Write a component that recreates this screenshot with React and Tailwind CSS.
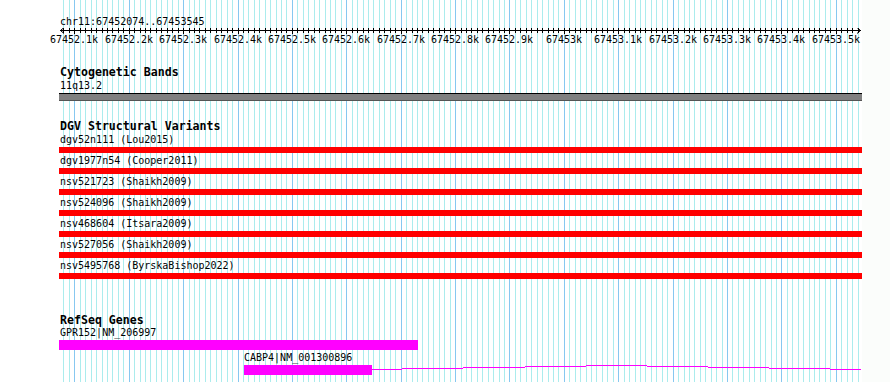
const START = 67452074;
const PX = 0.5439;
const X0 = 60.2;
const xOf = (bp) => X0 + (bp - START) * PX;

const ticks = [];
for (let bp = 67452080; bp <= 67453540; bp += 10) ticks.push(bp);

const labels = [
  [67452100, "67452.1k"],
  [67452200, "67452.2k"],
  [67452300, "67452.3k"],
  [67452400, "67452.4k"],
  [67452500, "67452.5k"],
  [67452600, "67452.6k"],
  [67452700, "67452.7k"],
  [67452800, "67452.8k"],
  [67452900, "67452.9k"],
  [67453000, "67453k"],
  [67453100, "67453.1k"],
  [67453200, "67453.2k"],
  [67453300, "67453.3k"],
  [67453400, "67453.4k"],
  [67453500, "67453.5k"],
];

function Grid() {
  return (
    <svg className="absolute inset-0" width="862" height="382">
      {ticks.map((bp) => {
        const x = Math.round(xOf(bp)) + 0.5;
        const major = bp % 100 === 0;
        return (
          <line
            key={bp}
            x1={x}
            x2={x}
            y1={0}
            y2={382}
            stroke={major ? "#87c8f0" : "#abeced"}
            strokeWidth="1"
          />
        );
      })}
    </svg>
  );
}

function Ruler() {
  return (
    <svg className="block" width="862" height="20">
      <line x1="60" x2="861" y1="2.5" y2="2.5" stroke="#000" strokeWidth="1" />
      {ticks.map((bp) => {
        const x = Math.round(xOf(bp)) + 0.5;
        const major = bp % 100 === 0;
        return (
          <line
            key={bp}
            x1={x}
            x2={x}
            y1={0}
            y2={major ? 6 : 5}
            stroke="#000"
            strokeWidth="1"
          />
        );
      })}
      <polyline points="64,-0.5 60.5,2.5 64,5.5" fill="none" stroke="#000" strokeWidth="1" />
      <polyline points="857,-0.5 860.5,2.5 857,5.5" fill="none" stroke="#000" strokeWidth="1" />
      {labels.map(([bp, t]) => (
        <text
          key={bp}
          x={Math.round(xOf(bp))}
          y="15"
          textAnchor="middle"
          fontFamily="'DejaVu Sans Mono', monospace"
          fontSize="10"
          fill="#000"
        >
          {t}
        </text>
      ))}
    </svg>
  );
}

const dgv = [
  "dgv52n111 (Lou2015)",
  "dgv1977n54 (Cooper2011)",
  "nsv521723 (Shaikh2009)",
  "nsv524096 (Shaikh2009)",
  "nsv468604 (Itsara2009)",
  "nsv527056 (Shaikh2009)",
  "nsv5495768 (ByrskaBishop2022)",
];

const intron = [
  [372, 402, 4],
  [402, 463, 3],
  [463, 525, 2],
  [525, 586, 1],
  [586, 647, 0],
  [647, 708, 1],
  [708, 769, 2],
  [769, 830, 3],
  [830, 861, 4],
];

export default function App() {
  return (
    <div className="w-[890px] h-[382px] bg-[#fbfdfb] overflow-hidden font-['DejaVu_Sans_Mono',monospace] text-black">
      <div className="relative w-[862px] h-[382px] bg-white">
        <Grid />
        <div className="relative">
          <div className="pt-[15px] pl-[60px] text-[10px] leading-[13px] whitespace-pre">
            chr11:67452074..67453545
          </div>
          <Ruler />

          <div className="mt-[18px]">
            <div className="pl-[60px] font-bold text-[11.6px] leading-[13px] whitespace-pre">
              Cytogenetic Bands
            </div>
            <div className="pl-[60px] text-[10px] leading-[13px]">11q13.2</div>
            <div className="mt-[1px] ml-[59px] w-[803px] h-[8px] border-t border-b border-t-black border-b-[#555555] bg-[#808080]" />
          </div>

          <div className="mt-[19px]">
            <div className="pl-[60px] font-bold text-[11.6px] leading-[13px] whitespace-pre">
              DGV Structural Variants
            </div>
            {dgv.map((d) => (
              <div key={d}>
                <div className="pl-[60px] text-[10px] leading-[13px] whitespace-pre">{d}</div>
                <div className="mt-[1px] mb-[1px] ml-[59px] w-[803px] h-[6px] bg-[#ff0000]" />
              </div>
            ))}
          </div>

          <div className="mt-[35px]">
            <div className="pl-[60px] font-bold text-[11.6px] leading-[12px] whitespace-pre">
              RefSeq Genes
            </div>
            <div className="pl-[60px] text-[10px] leading-[13px]">GPR152|NM_206997</div>
            <div className="mt-[1px] ml-[59px] w-[359px] h-[10px] bg-[#ff00ff]" />
            <div className="mt-[1px] pl-[244px] text-[10px] leading-[13px]">CABP4|NM_001300896</div>
            <div className="mt-[1px] ml-[244px] flex">
              <div className="w-[128px] h-[10px] bg-[#ff00ff]" />
              <svg width="490" height="10" className="block">
                {intron.map(([a, b, y]) => (
                  <line
                    key={a}
                    x1={a - 372}
                    x2={b - 372}
                    y1={y + 0.5}
                    y2={y + 0.5}
                    stroke="#ff00ff"
                    strokeWidth="1"
                  />
                ))}
              </svg>
            </div>
          </div>
        </div>
      </div>
    </div>
  );
}
